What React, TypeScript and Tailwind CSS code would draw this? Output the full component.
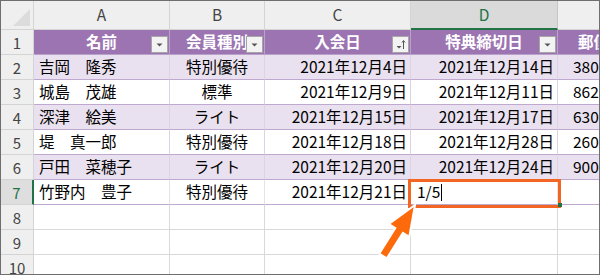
import React from 'react';

const cols = ['w-[33px]', 'w-[136px]', 'w-[95px]', 'w-[146px]', 'w-[147px]', 'flex-1'];

type Row = { n: string; a: string; b: string; c: string; d: string; e: string };

const rows: Row[] = [
  { n: '2', a: '吉岡　隆秀', b: '特別優待', c: '2021年12月4日', d: '2021年12月14日', e: '380-0821' },
  { n: '3', a: '城島　茂雄', b: '標準', c: '2021年12月9日', d: '2021年12月11日', e: '862-0950' },
  { n: '4', a: '深津　絵美', b: 'ライト', c: '2021年12月15日', d: '2021年12月17日', e: '630-8213' },
  { n: '5', a: '堤　真一郎', b: '特別優待', c: '2021年12月18日', d: '2021年12月28日', e: '260-0013' },
  { n: '6', a: '戸田　菜穂子', b: 'ライト', c: '2021年12月20日', d: '2021年12月24日', e: '900-0015' },
];

const FilterBtn = ({ sort }: { sort?: boolean }) => (
  <div className="absolute right-[1px] bottom-[1px] w-[17px] h-[17px] bg-[#f3f3f3] border border-[#a6a6a6] flex items-center justify-center">
    <svg width="15" height="15" viewBox="0 0 15 15">
      {sort ? (
        <>
          <path d="M3.5 9 L8.5 9 L6 11.5 Z" fill="#555" />
          <path d="M10.5 12 V4 M9 5.5 L10.5 3.5 L12 5.5" stroke="#555" strokeWidth="1" fill="none" />
        </>
      ) : (
        <path d="M4.5 6.5 L10.5 6.5 L7.5 9.5 Z" fill="#555" />
      )}
    </svg>
  </div>
);

export default function App() {
  const rowHead = 'flex items-center justify-center bg-[#efefef] text-[#444] border-r border-b border-[#d4d4d4] text-[15px]';
  return (
    <div className="relative w-[600px] h-[275px] overflow-hidden bg-white border border-[#6e6e6e] font-['Noto_Sans_CJK_JP','Noto_Sans',sans-serif] text-[15.5px] text-black leading-none">
      {/* column letters */}
      <div className="flex h-[29px]">
        <div className={`${cols[0]} bg-[#efefef] border-r border-b border-[#d4d4d4] flex items-end justify-end p-[3px]`}>
          <svg width="17" height="17" viewBox="0 0 17 17"><path d="M17 0 L17 17 L0 17 Z" fill="#dcdcdc" /></svg>
        </div>
        {['A', 'B', 'C'].map((l, i) => (
          <div key={l} className={`${cols[i + 1]} bg-[#efefef] border-r border-b border-[#d4d4d4] flex items-center justify-center text-[#444]`}>{l}</div>
        ))}
        <div className={`${cols[4]} bg-[#dadada] border-r border-[#c6c6c6] border-b-2 border-b-[#217346] flex items-center justify-center text-[#217346]`}>D</div>
        <div className={`${cols[5]} bg-[#efefef] border-b border-[#d4d4d4]`} />
      </div>

      {/* table header */}
      <div className="flex h-[25px]">
        <div className={`${cols[0]} ${rowHead}`}>1</div>
        <div className={`${cols[1]} relative bg-[#9c74b1] border-r border-b border-[#b9a1c9] flex items-center justify-center text-white font-bold`}>名前<FilterBtn /></div>
        <div className={`${cols[2]} relative bg-[#9c74b1] border-r border-b border-[#b9a1c9] flex items-center justify-center text-white font-bold`}>会員種別<FilterBtn /></div>
        <div className={`${cols[3]} relative bg-[#9c74b1] border-r border-b border-[#b9a1c9] flex items-center justify-center text-white font-bold`}>入会日<FilterBtn sort /></div>
        <div className={`${cols[4]} relative bg-[#9c74b1] border-r border-b border-[#b9a1c9] flex items-center justify-center text-white font-bold`}>特典締切日<FilterBtn /></div>
        <div className={`${cols[5]} bg-[#9c74b1] border-b border-[#b9a1c9] flex items-center pl-[20px] text-white font-bold whitespace-nowrap overflow-hidden`}>郵便番号</div>
      </div>

      {rows.map((r, idx) => {
        const bg = idx % 2 === 0 ? 'bg-[#e9e1ef]' : 'bg-white';
        const cell = `${bg} border-r border-b border-r-[#dcd4e2] border-b-[#bfa9cf] flex items-center whitespace-nowrap overflow-hidden`;
        return (
          <div key={r.n} className="flex h-[25px]">
            <div className={`${cols[0]} ${rowHead}`}>{r.n}</div>
            <div className={`${cols[1]} ${cell} pl-[5px]`}>{r.a}</div>
            <div className={`${cols[2]} ${cell} justify-center`}>{r.b}</div>
            <div className={`${cols[3]} ${cell} justify-end pr-[3px]`}>{r.c}</div>
            <div className={`${cols[4]} ${cell} justify-end pr-[3px]`}>{r.d}</div>
            <div className={`${cols[5]} ${bg} border-b border-b-[#bfa9cf] flex items-center pl-[15px] whitespace-nowrap overflow-hidden`}>{r.e}</div>
          </div>
        );
      })}

      {/* row 7 (editing) */}
      <div className="flex h-[25px]">
        <div className={`${cols[0]} flex items-center justify-center bg-[#dedede] text-[#217346] text-[15px] border-r-2 border-r-[#217346] border-b border-[#d4d4d4]`}>7</div>
        <div className={`${cols[1]} bg-white border-r border-b border-r-[#e4e4e4] border-b-[#bfa9cf] flex items-center pl-[5px] whitespace-nowrap`}>竹野内　豊子</div>
        <div className={`${cols[2]} bg-white border-r border-b border-r-[#e4e4e4] border-b-[#bfa9cf] flex items-center justify-center`}>特別優待</div>
        <div className={`${cols[3]} bg-white border-r border-b border-r-[#e4e4e4] border-b-[#bfa9cf] flex items-center justify-end pr-[3px] whitespace-nowrap`}>2021年12月21日</div>
        <div className={`${cols[4]} bg-white border-r border-b border-r-[#e4e4e4] border-b-[#bfa9cf] flex items-center pl-[6px]`}>
          1/5<span className="ml-[1px] w-px h-[17px] bg-black" />
        </div>
        <div className={`${cols[5]} bg-white border-b border-b-[#bfa9cf]`} />
      </div>

      {['8', '9', '10'].map((n) => (
        <div key={n} className="flex h-[25px]">
          <div className={`${cols[0]} ${rowHead}`}>{n}</div>
          {[1, 2, 3, 4].map((i) => (
            <div key={i} className={`${cols[i]} border-r border-b border-[#d9d9d9]`} />
          ))}
          <div className={`${cols[5]} border-b border-[#d9d9d9]`} />
        </div>
      ))}

      {/* highlight box on D7 */}
      <div className="absolute left-[407px] top-[178px] w-[153px] h-[29px] border-[3px] border-[#f26522]" />
      <div className="absolute left-[557px] top-[202px] w-[4px] h-[4px] bg-[#217346]" />

      {/* arrow */}
      <svg className="absolute left-0 top-0" width="600" height="275" viewBox="-1 -1 600 275">
        <polygon
          points="413,203 407.3,234.8 400.9,230.8 384.8,256.4 377.2,251.6 393.3,226 386.9,222"
          fill="#fc6a0c"
          stroke="white"
          strokeWidth="2"
          strokeLinejoin="miter"
        />
      </svg>
    </div>
  );
}
